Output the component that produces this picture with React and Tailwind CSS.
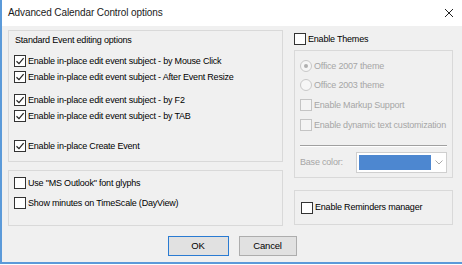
import React from "react";

const font = { fontFamily: '"Liberation Sans", Arial, sans-serif' };

const Check = ({ checked, disabled }) => (
  <span
    className={`w-[12px] h-[12px] border flex items-center justify-center shrink-0 ${
      disabled ? "border-[#c4c4c4] bg-[#f4f4f4]" : "border-[#333333] bg-white"
    }`}
  >
    {checked && (
      <svg width="10" height="10" viewBox="0 0 10 10">
        <path d="M1.5 5.2 L4 7.6 L8.6 2.2" fill="none" stroke="#222" strokeWidth="1.2" />
      </svg>
    )}
  </span>
);

const Radio = ({ checked }) => (
  <span className="w-[12px] h-[12px] rounded-full border border-[#c8c8c8] bg-[#f6f6f6] flex items-center justify-center shrink-0">
    {checked && <span className="w-[4px] h-[4px] rounded-full bg-[#b0b0b0]" />}
  </span>
);

const Row = ({ children, checked, disabled, radio, className = "" }) => (
  <div className={`flex items-center h-[16px] gap-[2px] whitespace-nowrap ${className}`}>
    {radio ? <Radio checked={checked} /> : <Check checked={checked} disabled={disabled} />}
    <span className={disabled ? "text-[#a6a6a6]" : "text-black"}>{children}</span>
  </div>
);

export default function App() {
  return (
    <div
      className="w-[462px] h-[265px] bg-white text-[9px] tracking-[-0.2px] leading-none overflow-hidden"
      style={font}
    >
      <div className="w-[462px] h-[264px] border-l-2 border-b-2 border-[#5b9ad9] bg-[#f0f0f0] flex flex-col">
        {/* Title bar */}
        <div className="h-[26px] bg-white flex items-center justify-between pl-[6px] pr-[8px] shrink-0">
          <span className="text-[10px] tracking-[-0.1px] text-[#1a1a1a]">Advanced Calendar Control options</span>
          <svg width="10" height="10" viewBox="0 0 10 10">
            <path d="M1 1 L9 9 M9 1 L1 9" stroke="#222" strokeWidth="1" />
          </svg>
        </div>

        {/* Body */}
        <div className="flex pl-[6px] pr-[9px] pt-[4px] gap-[11px]">
          {/* Left column */}
          <div className="w-[275px] flex flex-col gap-[8px]">
            <div className="h-[132px] border border-[#d9d9d9] pl-[5px] pt-[3px]">
              <div className="h-[12px] flex items-center pl-[1px] text-black">
                Standard Event editing options
              </div>
              <Row checked className="mt-[7px]">Enable in-place edit event subject - by Mouse Click</Row>
              <Row checked>Enable in-place edit event subject - After Event Resize</Row>
              <Row checked className="mt-[7px]">Enable in-place edit event subject - by F2</Row>
              <Row checked>Enable in-place edit event subject - by TAB</Row>
              <Row checked className="mt-[14px]">Enable in-place Create Event</Row>
            </div>
            <div className="h-[56px] border border-[#d9d9d9] pl-[5px] pt-[4px] flex flex-col gap-[4px]">
              <Row>Use "MS Outlook" font glyphs</Row>
              <Row>Show minutes on TimeScale (DayView)</Row>
            </div>
          </div>

          {/* Right column */}
          <div className="flex-1 flex flex-col">
            <Row className="h-[14px] mt-[1px]">Enable Themes</Row>
            <div className="h-[128px] mt-[3px] border border-[#d9d9d9] px-[5px] pt-[7px]">
              <Row radio checked disabled>Office 2007 theme</Row>
              <Row radio disabled className="mt-[3px]">Office 2003 theme</Row>
              <Row disabled className="mt-[4px]">Enable Markup Support</Row>
              <Row disabled className="mt-[4px]">Enable dynamic text customization</Row>
              <div className="mt-[12px] border-t border-[#a0a0a0] border-b border-b-white" />
              <div className="mt-[5px] flex items-center justify-between h-[21px]">
                <span className="text-[#a6a6a6]">Base color:</span>
                <div className="w-[91px] h-[21px] border border-[#cfcfcf] bg-white flex items-center pl-[2px]">
                  <div className="w-[72px] h-[15px] bg-[#4d87d0]" />
                  <div className="flex-1 flex justify-center">
                    <svg width="8" height="5" viewBox="0 0 8 5">
                      <path d="M0.5 0.5 L4 4 L7.5 0.5" fill="none" stroke="#a8a8a8" strokeWidth="1" />
                    </svg>
                  </div>
                </div>
              </div>
            </div>
            <div className="h-[35px] mt-[12px] border border-[#d9d9d9] pl-[6px] flex items-center">
              <Row>Enable Reminders manager</Row>
            </div>
          </div>
        </div>

        {/* Buttons */}
        <div className="flex justify-center gap-[10px] mt-[10px]">
          <button className="w-[61px] h-[20px] border border-[#2a7bd2] bg-[#e1e1e1] text-black text-[9.5px] flex items-center justify-center">
            OK
          </button>
          <button className="w-[58px] h-[20px] border border-[#adadad] bg-[#e1e1e1] text-black text-[9.5px] flex items-center justify-center">
            Cancel
          </button>
        </div>
      </div>
    </div>
  );
}
